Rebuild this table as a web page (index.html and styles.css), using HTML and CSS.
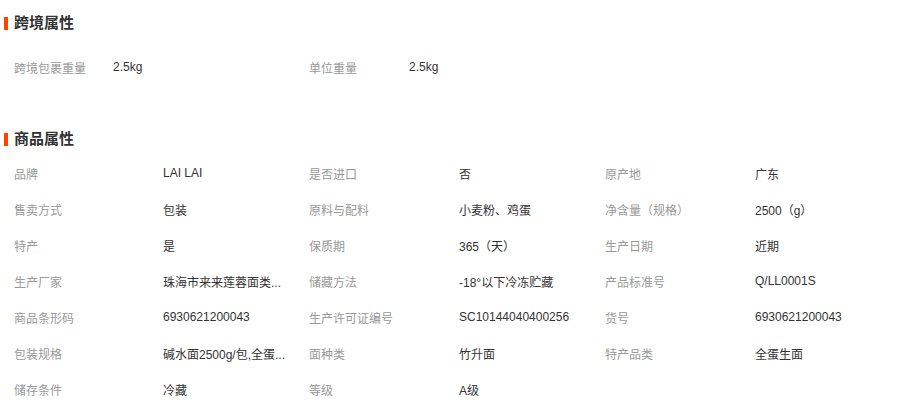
FILE: index.html
```html
<!DOCTYPE html>
<html>
<head>
<meta charset="utf-8">
<meta name="viewport" content="width=device-width, initial-scale=1.0">
<link rel="stylesheet" href="styles.css">
</head>
<body>

<div class="section">
  <h3 class="title">跨境属性</h3>
  <div class="attrs cross">
    <span class="label">跨境包裹重量</span><span class="value">2.5kg</span>
    <span class="label">单位重量</span><span class="value">2.5kg</span>
  </div>
</div>

<div class="section goods">
  <h3 class="title">商品属性</h3>
  <div class="attrs">
    <span class="label">品牌</span><span class="value">LAI LAI</span>
    <span class="label">是否进口</span><span class="value">否</span>
    <span class="label">原产地</span><span class="value">广东</span>

    <span class="label">售卖方式</span><span class="value">包装</span>
    <span class="label">原料与配料</span><span class="value">小麦粉、鸡蛋</span>
    <span class="label">净含量（规格）</span><span class="value">2500（g）</span>

    <span class="label">特产</span><span class="value">是</span>
    <span class="label">保质期</span><span class="value">365（天）</span>
    <span class="label">生产日期</span><span class="value">近期</span>

    <span class="label">生产厂家</span><span class="value" title="珠海市来来莲蓉面类食品有限公司">珠海市来来莲蓉面类...</span>
    <span class="label">储藏方法</span><span class="value">-18°以下冷冻贮藏</span>
    <span class="label">产品标准号</span><span class="value">Q/LL0001S</span>

    <span class="label">商品条形码</span><span class="value">6930621200043</span>
    <span class="label">生产许可证编号</span><span class="value">SC10144040400256</span>
    <span class="label">货号</span><span class="value">6930621200043</span>

    <span class="label">包装规格</span><span class="value" title="碱水面2500g/包,全蛋面2500g/包">碱水面2500g/包,全蛋...</span>
    <span class="label">面种类</span><span class="value">竹升面</span>
    <span class="label">特产品类</span><span class="value">全蛋生面</span>

    <span class="label">储存条件</span><span class="value">冷藏</span>
    <span class="label">等级</span><span class="value">A级</span>
  </div>
</div>

</body>
</html>
```

FILE: styles.css
```css
body {
  margin: 0;
  background: #fff;
  font-family: "Liberation Sans", Arial, "Noto Sans CJK SC", sans-serif;
  font-size: 12px;
  color: #333;
}

.section {
  padding-top: 12px;
}

.section.goods {
  padding-top: 43px;
}

.title {
  margin: 0;
  height: 22px;
  line-height: 22px;
  padding-left: 14px;
  position: relative;
  font-size: 15px;
  font-weight: bold;
  color: #333;
}

.title::before {
  content: "";
  position: absolute;
  left: 4px;
  top: 5px;
  width: 4px;
  height: 13px;
  background: #ff4400;
}

.attrs {
  display: grid;
  grid-template-columns: 149px 146px 150px 146px 150px 146px;
  grid-auto-rows: 36px;
  align-items: center;
  padding-left: 14px;
  margin-top: 5px;
}

.attrs.cross {
  grid-template-columns: 99px 196px 100px 196px;
  margin-top: 15px;
}

.label {
  color: #999;
  white-space: nowrap;
}

.value {
  color: #333;
  white-space: nowrap;
}
```
